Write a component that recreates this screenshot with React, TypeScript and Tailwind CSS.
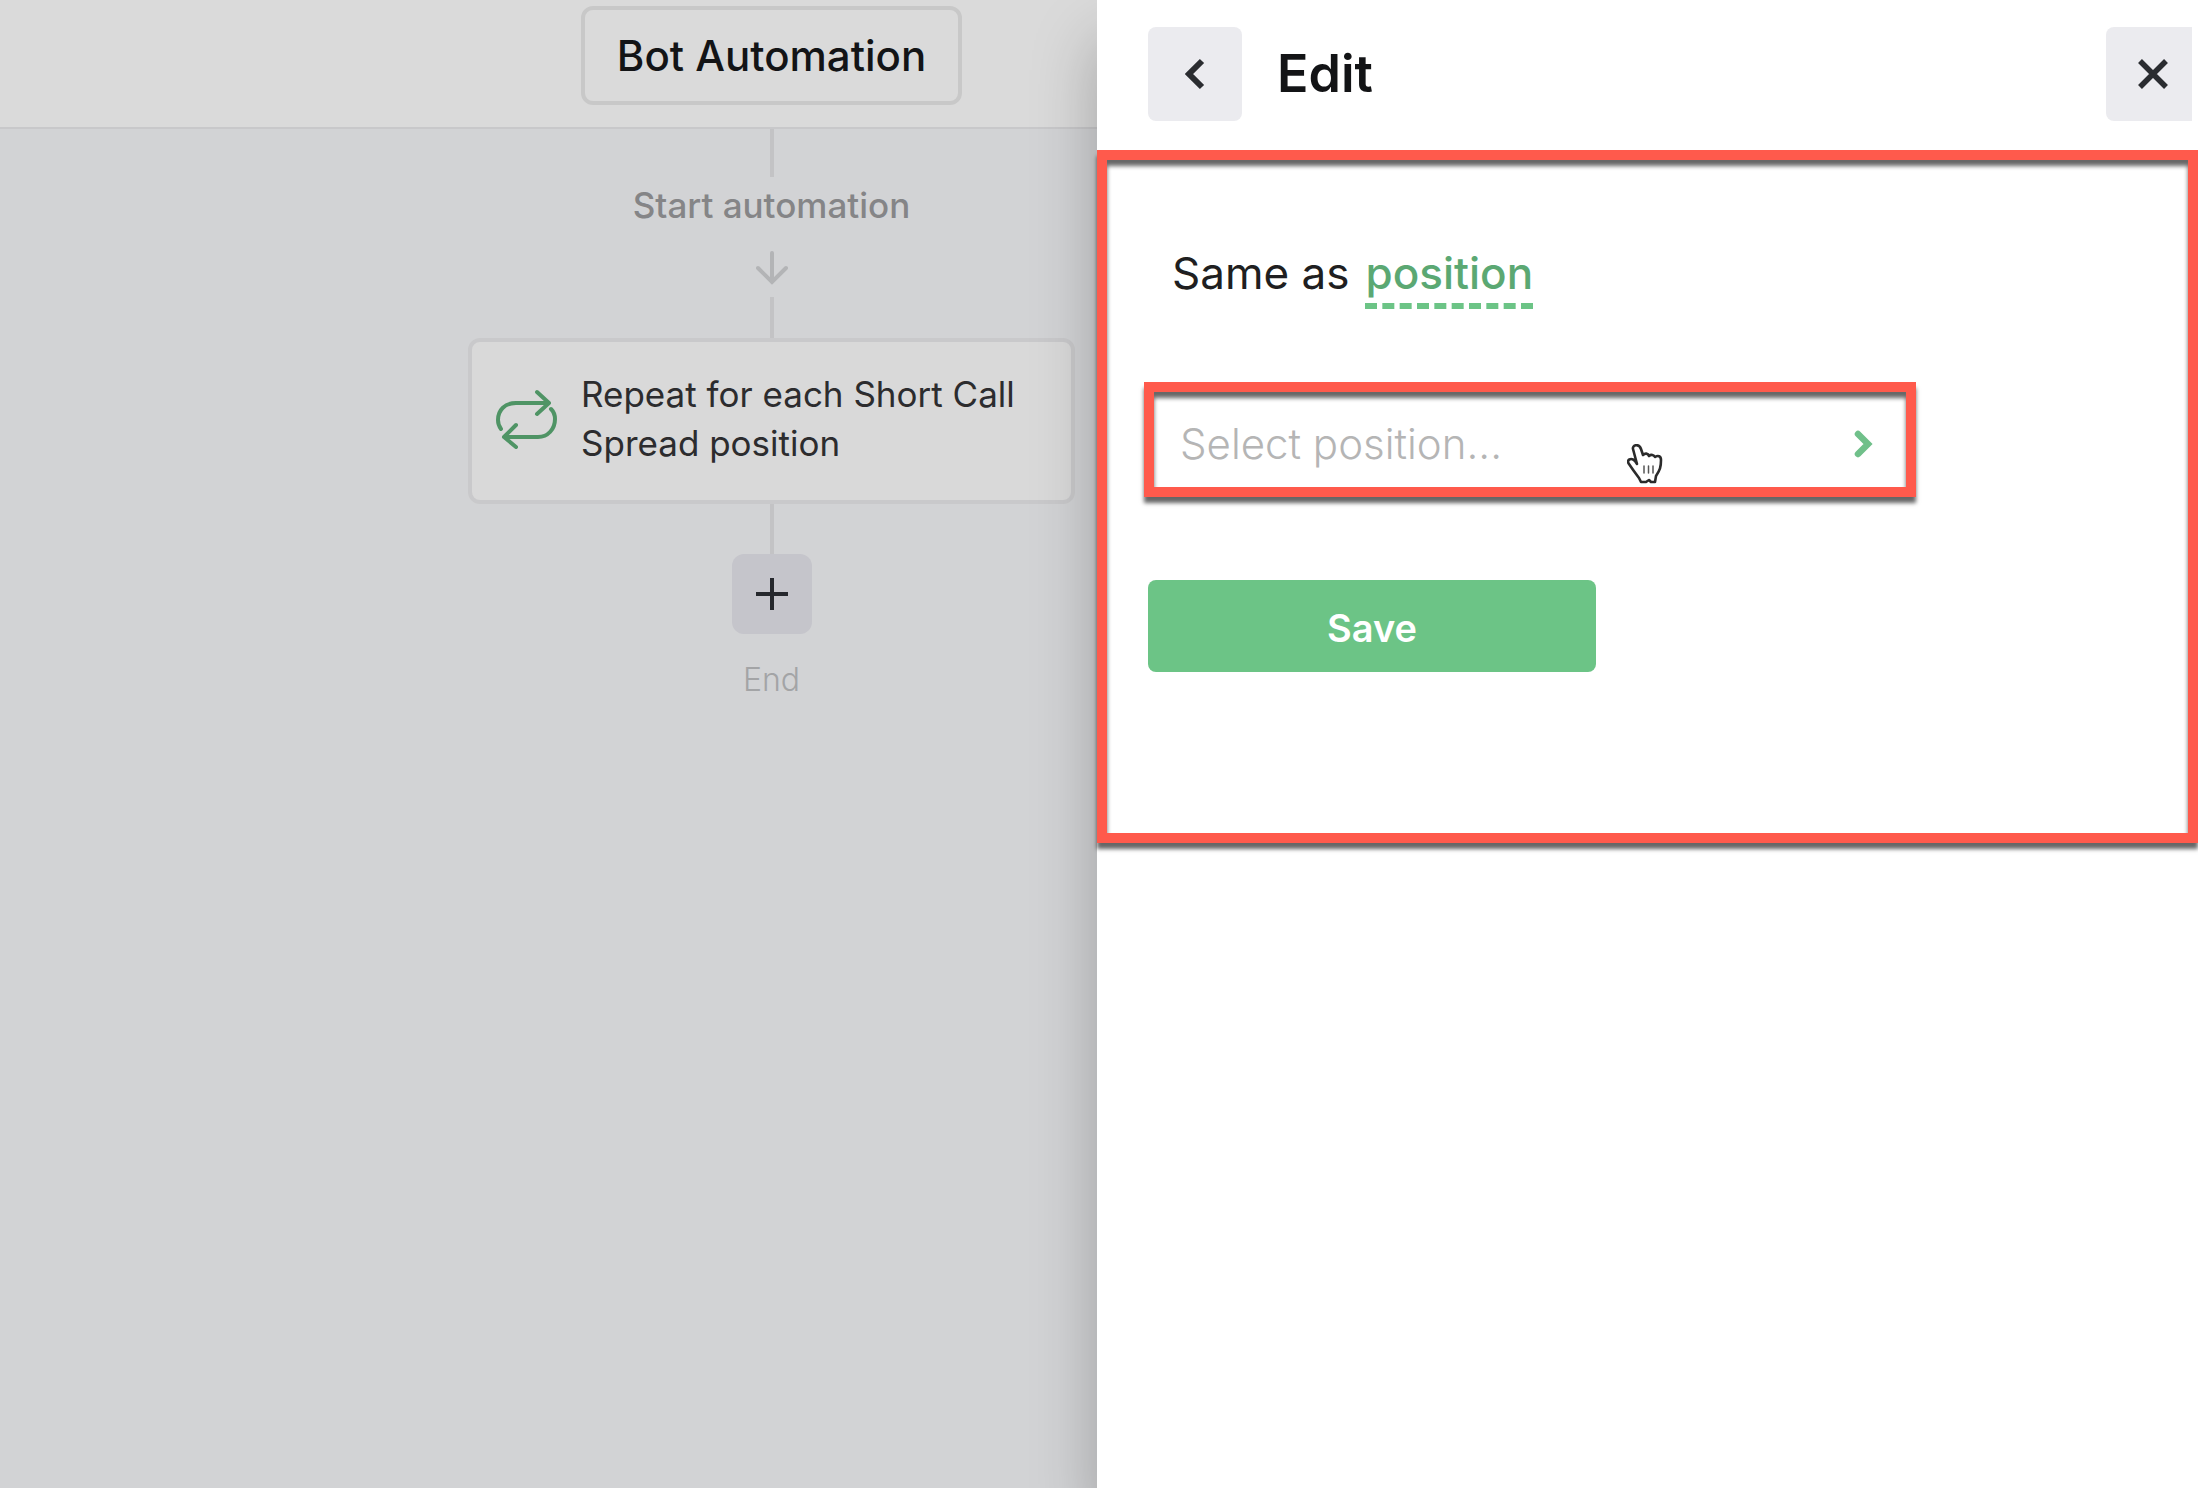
import { ReactNode } from "react";

function Connector({ className }: { className: string }) {
  return <div className={`w-1 bg-[#c3c3c5] ${className}`} />;
}

function ArrowDown() {
  return (
    <svg className="h-[34px] w-8" viewBox="0 0 32 34" fill="none" stroke="#b3b4b6" strokeWidth="4" strokeLinecap="round">
      <path d="M16 2v29M2 17l14 14 14-14" />
    </svg>
  );
}

function LoopIcon() {
  return (
    <svg
      className="h-[60px] w-[61px] shrink-0"
      viewBox="0 0 61 60"
      fill="none"
      stroke="#4f9465"
      strokeWidth="4"
      strokeLinecap="round"
      strokeLinejoin="round"
    >
      <path d="M41 3l12 11-12 11M53 14H20C9 14 2 21 2 31c0 4 1.500 7 3 9" />
      <path d="M20 36L8 48l12 10M8 48h34c10 0 17-8 17-18 0-4-1.500-7.500-4-10" />
    </svg>
  );
}

function HandCursor() {
  return (
    <svg className="h-10 w-9" viewBox="0 0 36 40" fill="#fff" stroke="#2b2b2b" strokeWidth="2.600" strokeLinejoin="round" strokeLinecap="round">
      <path d="M6 5c-1-4 6-6 8 0l2 6c2-2 5-2 6 1 2-2 5-1 6 1 3-2 6-1 6 3 0 7-1 10-5 16l-1 6-4 0-2-2-3 2h-5l-2-4C9 30 6 26 2 20c-3-4 2-7 6-3l2 3z" />
      <path d="M17 22v7M21.500 22v7M26 22v7" stroke="#555" strokeWidth="1.500" />
    </svg>
  );
}

function Step({ children }: { children: ReactNode }) {
  return (
    <div className="w-full px-[22px]">
      <div className="flex items-center gap-6 rounded-xl border-4 border-[#c9c9cb] bg-[#d9d9d9] pt-7 pr-4 pb-8 pl-6">
        <LoopIcon />
        <p className="text-[35px] leading-[49px] text-[#2c2c2e]">{children}</p>
      </div>
    </div>
  );
}

function Canvas() {
  return (
    <main className="flex min-w-0 flex-col bg-[#d2d3d5]">
      <header className="flex justify-center border-b-2 border-[#c8c8ca] bg-[#dadada] pt-1.5 pb-[22px] pl-[446px]">
        <h1 className="rounded-xl border-4 border-[#c8c8c8] px-8 text-[42px] leading-[91px] font-medium whitespace-nowrap text-[#131416]">
          Bot Automation
        </h1>
      </header>

      <div className="flex flex-col items-center pl-[446px]">
        <Connector className="h-12" />
        <p className="mt-2 text-[35px] leading-10 font-medium whitespace-nowrap text-[#858587]">Start automation</p>
        <div className="mt-[26px] mb-3">
          <ArrowDown />
        </div>
        <Connector className="h-[41px]" />
        <Step>Repeat for each Short Call Spread position</Step>
        <Connector className="h-[50px]" />
        <button aria-label="Add step" className="flex size-20 items-center justify-center rounded-xl bg-[#c5c5cb]">
          <svg className="size-8" viewBox="0 0 32 32" stroke="#26282d" strokeWidth="4">
            <path d="M16 0v32M0 16h32" />
          </svg>
        </button>
        <p className="mt-[26px] text-[32px] leading-10 font-light text-[#a3a4a6]">End</p>
      </div>
    </main>
  );
}

function EditPanel() {
  return (
    <aside className="relative min-w-0 bg-white shadow-[0_40px_60px_rgba(0,0,0,0.25)]">
      <header className="flex items-center pt-[27px] pr-1.5 pb-[29px] pl-[51px]">
        <button aria-label="Back" className="flex size-[94px] items-center justify-center rounded-lg bg-[#ebebef]">
          <svg className="h-8 w-5" viewBox="0 0 20 32" fill="none" stroke="#2a2c30" strokeWidth="6">
            <path d="M17 3L4 16l13 13" />
          </svg>
        </button>
        <h2 className="ml-[35px] text-[52px] leading-[60px] font-semibold text-[#131416]">Edit</h2>
        <button aria-label="Close" className="ml-auto flex h-[94px] w-[86px] items-center justify-center rounded-l-lg bg-[#ebebef]">
          <svg className="ml-2 size-[30px]" viewBox="0 0 30 30" stroke="#2a2c30" strokeWidth="5.500">
            <path d="M2 2l26 26M28 2L2 28" />
          </svg>
        </button>
      </header>

      <section className="border-[10px] border-[#ff5a4c] px-[37px] pt-[87px] pb-[161px] shadow-[0_6px_4px_rgba(0,0,0,0.6),inset_0_6px_4px_rgba(0,0,0,0.6)]">
        <div className="flex gap-4 px-7 text-[44px] leading-[52px] text-[#1f1f21]">
          <span>Same as</span>
          <button className="border-b-[6px] border-dashed border-[#6cc486] pb-1 font-medium text-[#5ba873]">position</button>
        </div>

        {/* Highlighted position picker */}
        <div className="relative mt-[73px] w-[772px] max-w-full border-[10px] border-[#ff5a4c] shadow-[0_6px_4px_rgba(0,0,0,0.6),inset_0_6px_4px_rgba(0,0,0,0.6)]">
          <button className="flex h-[95px] w-full items-center justify-between pt-2 pr-8 pl-[26px] text-[42px] font-light text-[#b5b5b5]">
            Select position...
            <svg className="h-7 w-5" viewBox="0 0 20 28" fill="none" stroke="#70c08a" strokeWidth="6.500" strokeLinecap="round">
              <path d="M4 4l10 10L4 24" />
            </svg>
          </button>
          <div className="pointer-events-none absolute top-[52px] right-[243px]">
            <HandCursor />
          </div>
        </div>

        <button className="mt-[83px] ml-1 h-[92px] w-[448px] rounded-lg bg-[#6cc486] pt-1 text-[38px] font-semibold text-white">
          Save
        </button>
      </section>
    </aside>
  );
}

export default function App() {
  return (
    <div className="grid min-h-screen grid-cols-[1097fr_1101fr] overflow-hidden font-['Inter',sans-serif]">
      <Canvas />
      <EditPanel />
    </div>
  );
}
